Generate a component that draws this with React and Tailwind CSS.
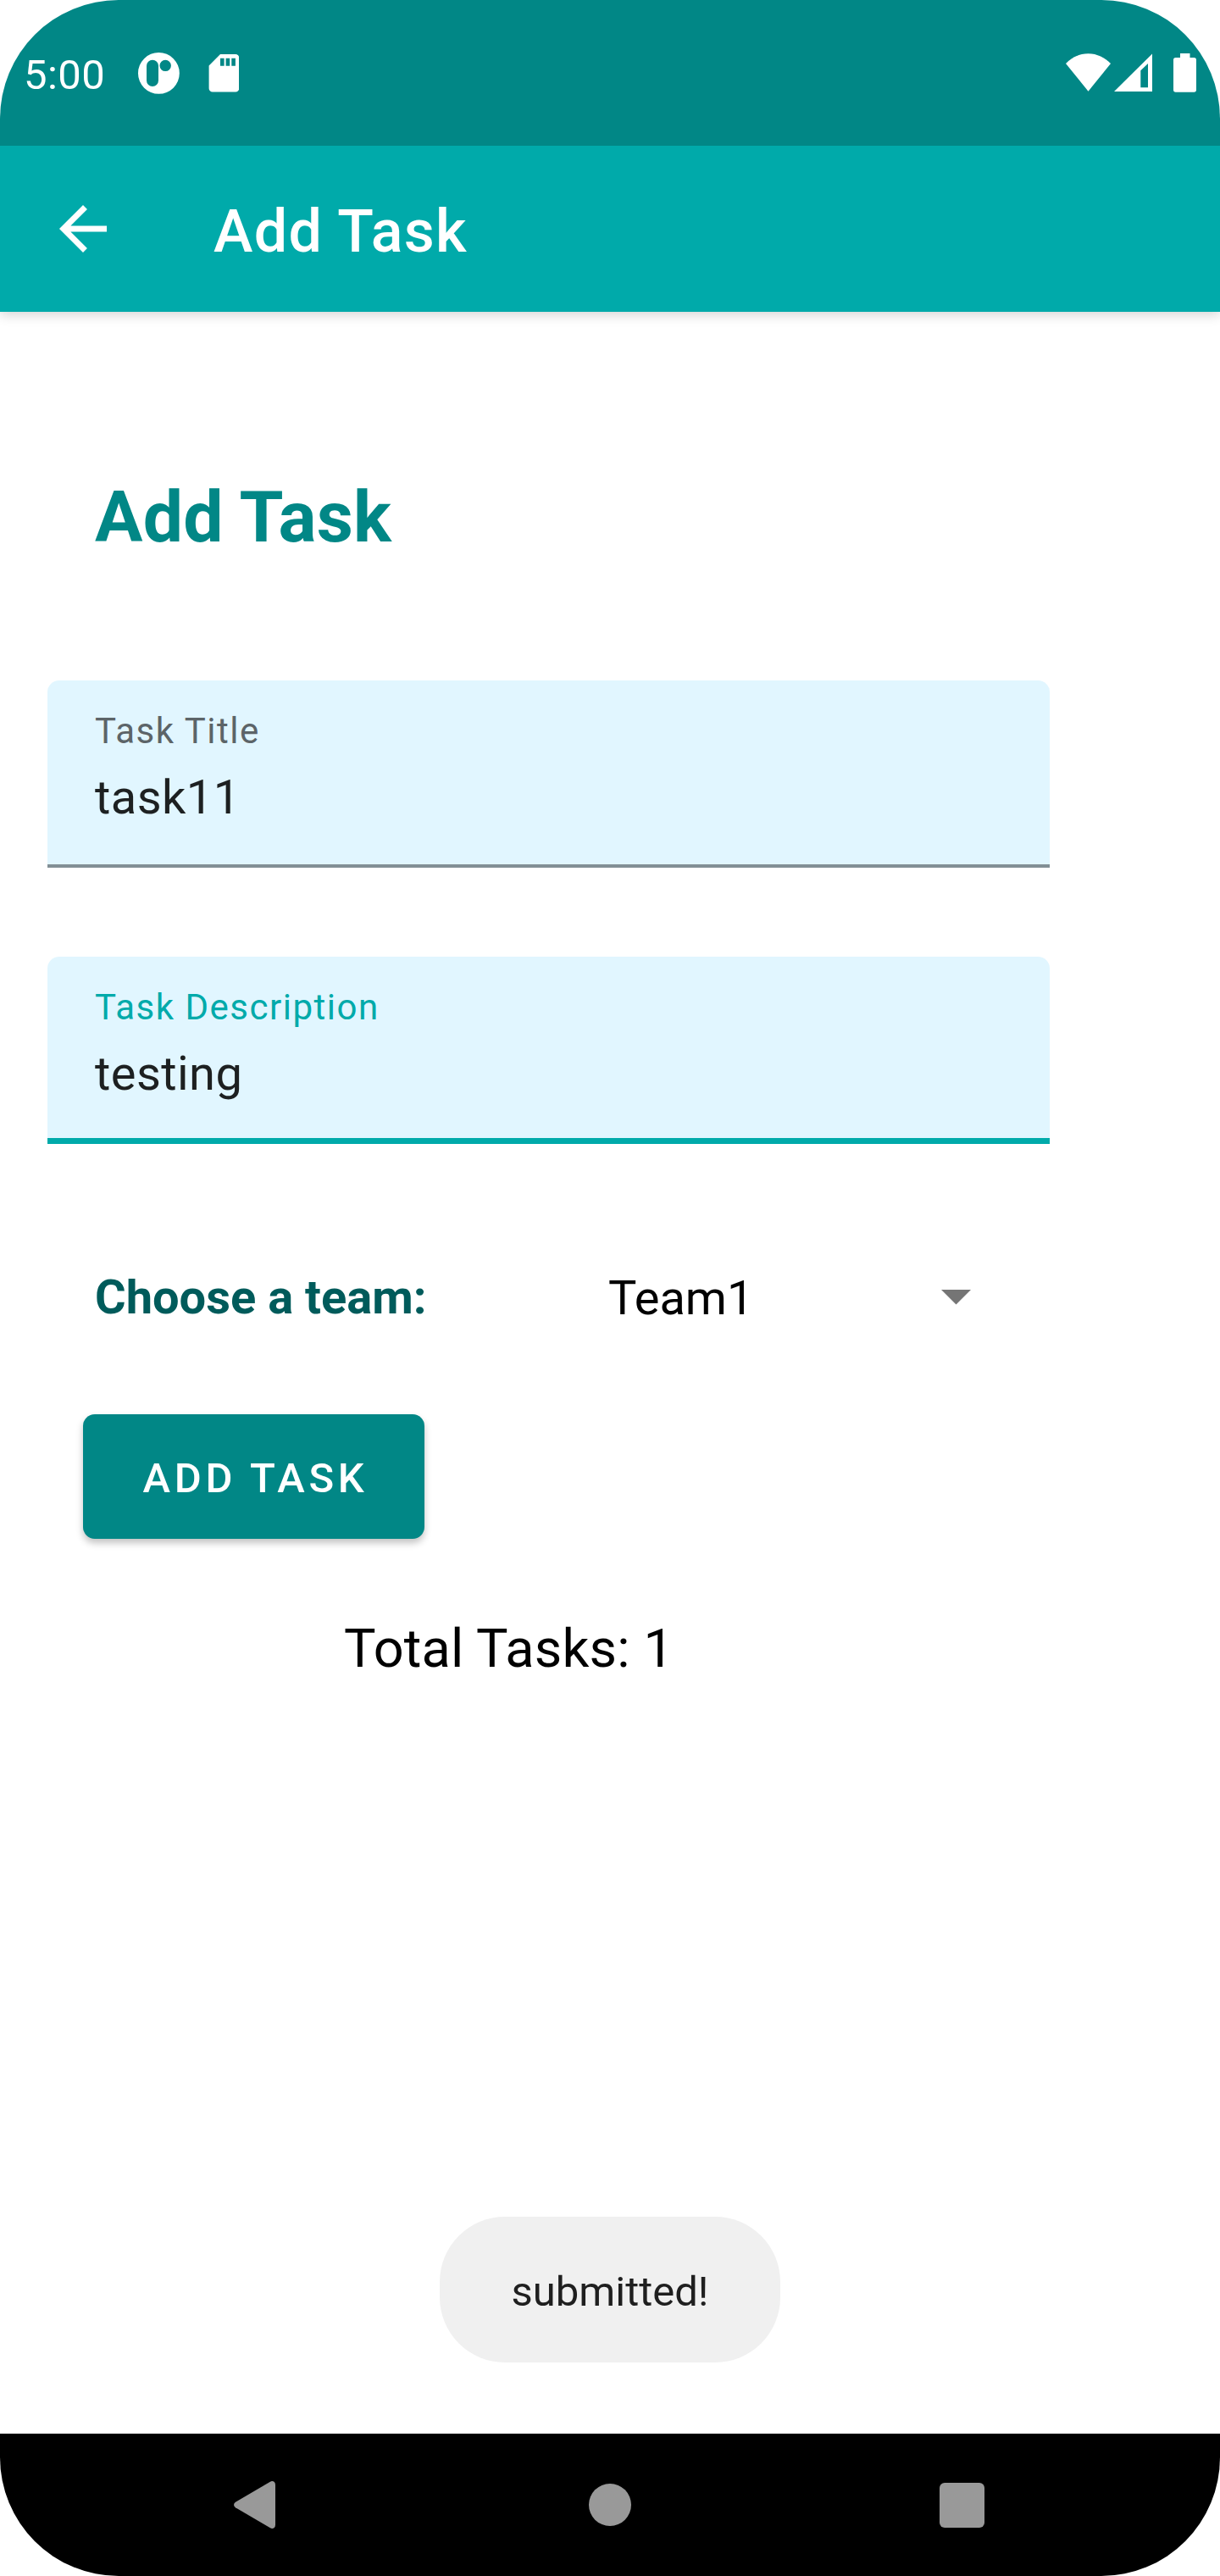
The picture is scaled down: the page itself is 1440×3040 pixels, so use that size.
function StatusBar() {
  return (
    <div className="relative z-10 flex h-[172px] items-center bg-[#018786] pr-7 pl-[28px] text-white">
      <span className="mt-[5px] w-[134px] text-[49px] leading-[58px] tracking-[0.4px]">5:00</span>
      <svg className="h-[52px] w-[52px]" viewBox="0 0 52 52">
        <path
          fill="currentColor"
          fillRule="evenodd"
          d="M25.4 2a24.4 24.4 0 1 1 0 48.8a24.4 24.4 0 1 1 0-48.8zM18 10.8a7 7 0 0 0-7 7v17.2a7 7 0 0 0 14 0v-17.2a7 7 0 0 0-7-7zM33.2 10.7a6.7 6.7 0 1 0 0 13.4a6.7 6.7 0 1 0 0-13.4z"
        />
      </svg>
      <svg className="ml-8 h-[46px] w-[36px]" viewBox="0 0 36 46">
        <path
          fill="currentColor"
          fillRule="evenodd"
          d="M14 1H32a4.3 4.3 0 0 1 4.3 4.3V41.200a4.300 4.300 0 0 1-4.300 4.300H4.900a4.300 4.300 0 0 1-4.300-4.300V14.600zM14 5.700v9h4.600v-9zM20.600 5.700v9h4.600v-9zM27.300 5.700v9h4.600v-9z"
        />
      </svg>
      <svg className="ml-auto h-[46px] w-[54px]" viewBox="0 0 54 46">
        <path fill="currentColor" d="M0 12C7 5 16 .200 26.500 .200S46 5 53 12L26.500 44.700z" />
      </svg>
      <svg className="ml-[3px] h-[46px] w-[46px]" viewBox="0 0 46 46">
        <path
          fill="currentColor"
          fillRule="evenodd"
          d="M0 45L45 .500V45zM31.300 20.300V40.200H40V12z"
        />
      </svg>
      <svg className="ml-[24px] h-[46px] w-[27px]" viewBox="0 0 27 46">
        <path
          fill="currentColor"
          d="M8 0H19.500V5H24.300a2.700 2.700 0 0 1 2.700 2.700V43a2.700 2.700 0 0 1-2.700 2.700H2.700A2.700 2.700 0 0 1 0 43V7.700A2.700 2.700 0 0 1 2.700 5H8z"
        />
      </svg>
    </div>
  );
}

function AppBar() {
  return (
    <header className="relative flex h-[196px] items-center bg-[#00aaaa] pl-14 text-white shadow-[0_3px_14px_rgba(0,0,0,0.18)]">
      <svg className="size-[84px]" viewBox="0 0 24 24" fill="currentColor">
        <path d="M20 11H7.830l5.590-5.590L12 4l-8 8 8 8 1.410-1.410L7.830 13H20v-2z" />
      </svg>
      <span className="mt-[6px] ml-28 text-[70px] leading-[82px] font-medium tracking-[1.3px]">
        Add Task
      </span>
    </header>
  );
}

function Field({ label, value, focused }) {
  return (
    <div
      className={
        "h-[221px] w-[1183px] rounded-t-[14px] bg-[#e1f6ff] " +
        (focused ? "shadow-[inset_0_-7px_0_#00aaaa]" : "shadow-[inset_0_-4px_0_#828f95]")
      }
    >
      <div className="px-14 pt-[35px]">
        <div
          className={
            "text-[42px] leading-[50px] tracking-[1.5px] " +
            (focused ? "text-[#00aaaa]" : "text-[#5c6468]")
          }
        >
          {label}
        </div>
        <div className="mt-5 text-[56px] leading-[66px] tracking-[0.45px] text-[#1d2021]">
          {value}
        </div>
      </div>
    </div>
  );
}

function NavBar() {
  return (
    <nav className="flex h-[168px] items-center bg-black pr-[278px] pl-[276px] text-[#999999]">
      <svg className="h-[56px] w-[49px]" viewBox="0 0 49 56">
        <path
          fill="currentColor"
          d="M2 24.800L43 .700Q45.400 -.500 47.500 .800Q49 2 49 4.500V51.500Q49 54 47.500 55.200Q45.400 56.500 43 55.300L2 31.200Q0 30 0 28T2 24.800z"
        />
      </svg>
      <div className="ml-[370px] size-[50px] rounded-full bg-[#999999]" />
      <div className="ml-auto size-[53px] rounded-[6px] bg-[#999999]" />
    </nav>
  );
}

export default function App() {
  return (
    <div className="h-[3040px] w-[1440px] bg-white">
      <div className="flex h-full flex-col overflow-hidden rounded-[140px] bg-white font-[Roboto,sans-serif]">
        <StatusBar />
        <AppBar />
        <main className="flex flex-1 flex-col pl-14">
          <h1 className="mt-[194px] ml-14 text-[84px] leading-[98px] font-bold tracking-[0.2px] text-[#018786]">
            Add Task
          </h1>
          <div className="mt-[143px] flex flex-col gap-[105px]">
            <Field label="Task Title" value="task11" />
            <Field label="Task Description" value="testing" focused />
          </div>
          <div className="mt-[148px] ml-14 flex h-[66px] items-center">
            <span className="w-[606px] text-[56px] leading-[66px] font-bold text-[#005b5b]">
              Choose a team:
            </span>
            <span className="mt-[2px] text-[56px] leading-[66px] text-black">Team1</span>
            <svg className="ml-auto mr-[294px] h-[18px] w-[35px]" viewBox="0 0 35 18">
              <path d="M0 0H35L17.500 17.500z" fill="#757575" />
            </svg>
          </div>
          <button className="mt-[105px] ml-[42px] h-[147px] w-[403px] rounded-[14px] bg-[#018786] pt-[4px] pl-[4px] text-[49px] leading-[58px] font-medium tracking-[4.700px] text-white shadow-[0_5px_9px_rgba(0,0,0,0.24)]">
            ADD TASK
          </button>
          <p className="mt-[93px] ml-[350px] text-[63px] leading-[74px] tracking-[0.17px] text-black">
            Total Tasks: 1
          </p>
          <div className="mt-auto mb-[84px] ml-[463px] flex h-[172px] w-[402px] items-center justify-center rounded-[77px] bg-[#f0f0f0] pt-[5px] text-[49px] leading-[58px] text-[#1f1f1f]">
            submitted!
          </div>
        </main>
        <NavBar />
      </div>
    </div>
  );
}
